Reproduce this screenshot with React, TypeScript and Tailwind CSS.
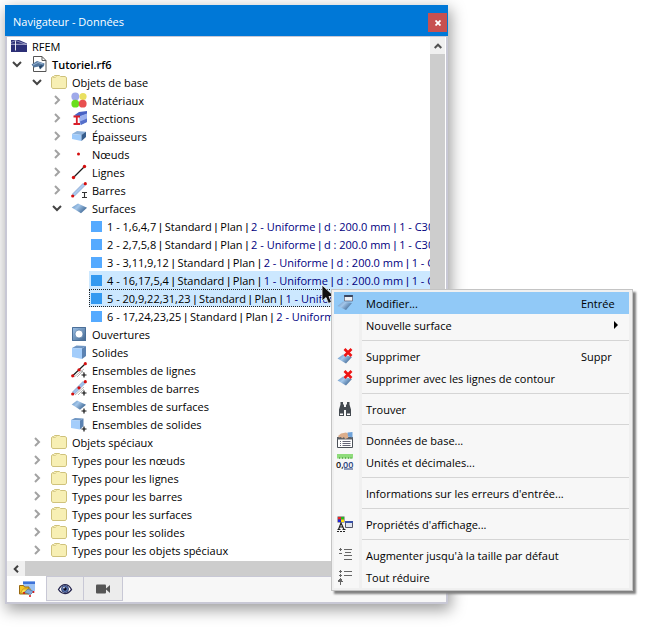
import type { ReactNode } from "react";
import clsx from "clsx";

const Svg = ({ children, crisp }: { children: ReactNode; crisp?: boolean }) => (
  <svg viewBox="0 0 16 16" className="block size-4 shrink-0" shapeRendering={crisp ? "crispEdges" : "auto"} aria-hidden="true">
    {children}
  </svg>
);

const Gradients = () => (
  <svg className="absolute size-0" aria-hidden="true">
    <defs>
      <linearGradient id="plate" x1="0" y1="0" x2="1" y2="0.6">
        <stop offset="0" stopColor="#5f8dbd" />
        <stop offset="0.45" stopColor="#a3c6ea" />
        <stop offset="1" stopColor="#3f6793" />
      </linearGradient>
      <linearGradient id="frame" x1="0" y1="0" x2="1" y2="1">
        <stop offset="0" stopColor="#9fc4ea" />
        <stop offset="1" stopColor="#41658d" />
      </linearGradient>
    </defs>
  </svg>
);

const Plus = () => <path d="M13 10.500v5M10.500 13h5" stroke="#111" strokeWidth="1.200" />;

const LogoIcon = () => (
  <Svg>
    <path d="M0 2h16v12H0z" fill="#2c2f76" />
    <path d="M8 2h8v3.500z" fill="#fff" />
    <path d="M0 6.300h16" stroke="#c9cbe4" strokeWidth=".8" />
    <path d="M4.500 2.500v10" stroke="#fff" strokeWidth=".9" />
    <path d="M0 4.500 4.500 2.500 15 6.300" stroke="#c9cbe4" strokeWidth=".6" fill="none" />
  </Svg>
);

const ModelIcon = () => (
  <Svg>
    <path d="M2.500.5h8.500l4 4v11H2.500z" fill="#fff" stroke="#555" />
    <path d="M11 .5v4h4" fill="none" stroke="#555" />
    <path d="M.5 8.500 6 5l7.500 2.500-.5 2.500-4 3.500-1-3L5 11l-2 .5z" fill="#54779f" />
    <path d="M2 9 7 6.500l5 1.500" fill="none" stroke="#a9c3dd" strokeWidth=".8" />
    <path d="m8 10 4-1-3 4z" fill="#23405f" />
  </Svg>
);

const FolderIcon = () => (
  <Svg>
    <path d="M.5 3.500 1.500 2.500h1l1-1h5l1 1H14l1.500 1V13l-1 1.500h-13L.5 13z" fill="#f7efb4" stroke="#cfc27c" />
    <path d="M1.500 3.500h3l1-1" stroke="#d9cd8c" fill="none" />
  </Svg>
);

const MaterialsIcon = () => (
  <Svg>
    <circle cx="4.300" cy="4.500" r="3.900" fill="#9fa9ea" />
    <circle cx="12" cy="4.500" r="3.600" fill="#e9e060" />
    <circle cx="4.300" cy="11.700" r="3.900" fill="#6adf1c" />
    <circle cx="11.700" cy="11.700" r="3.900" fill="#e85050" />
  </Svg>
);

const SectionsIcon = () => (
  <Svg>
    <path d="M3 5.500 8 2l8-1v3l-7 2.500z" fill="#4862c4" />
    <path d="m8 6.500 8-3v8.500l-7 3z" fill="#9bb0ee" />
    <path d="m9 11.500 7-3v3.500l-6 3z" fill="#5670ca" />
    <path d="M2.500 6.500h6.500M2.500 14h6.500M5.800 6.500V14" stroke="#d81e2a" strokeWidth="1.800" />
  </Svg>
);

const ThicknessIcon = () => (
  <Svg>
    <path d="M1 6 6 3l9 .8-4 3.200z" fill="#8fb2da" />
    <path d="M1 6l9.500 1v6L1 11z" fill="#9dcafb" />
    <path d="m10.500 7 4.500-3.200V9l-4.500 4z" fill="#375d8c" />
  </Svg>
);

const NodeIcon = () => (
  <Svg>
    <circle cx="7.500" cy="8" r="1.500" fill="#d40f0f" />
  </Svg>
);

const LineIcon = () => (
  <Svg>
    <path d="M2.500 13.500 13.500 2.500" stroke="#1a1a1a" strokeWidth="1.200" />
    <circle cx="2.500" cy="13.500" r="1.700" fill="#d40f0f" />
    <circle cx="13.500" cy="2.500" r="1.700" fill="#d40f0f" />
  </Svg>
);

const MemberIcon = () => (
  <Svg>
    <path d="M1.500 12 12 1.500l2 2L3.500 14z" fill="#a9c8ee" stroke="#7e9cc6" strokeWidth=".7" />
    <circle cx="1.700" cy="14" r="1.600" fill="#d40f0f" />
    <circle cx="14.300" cy="1.700" r="1.600" fill="#d40f0f" />
    <path d="M11 10.500h5M11 15.500h5M13.500 10.500v5" stroke="#333" strokeWidth="1.100" />
  </Svg>
);

const SurfaceIcon = () => (
  <Svg>
    <path d="M.7 7.400 7 3.400l9 4.300-6 5.600z" fill="url(#plate)" />
  </Svg>
);

const OpeningIcon = () => (
  <Svg>
    <path d="M1 1h14v14H1z" fill="url(#frame)" />
    <path d="M1.500 1.500h13v13h-13z" fill="none" stroke="#4b6f98" />
    <circle cx="8" cy="8" r="4" fill="#fff" stroke="#557ba6" strokeWidth=".7" />
  </Svg>
);

const SolidIcon = () => (
  <Svg>
    <path d="M1 4 5.500 1.500 15 2l-4 2.500z" fill="#6f96c4" />
    <path d="m1 4 10 .5V15L1 13z" fill="#a3cdfb" />
    <path d="m11 4.500 4-2.500v10l-4 3z" fill="#5b82b2" />
  </Svg>
);

const LineSetIcon = () => (
  <Svg>
    <path d="m3 15 10-8M6 15l6-6M9 8l4 3" stroke="#999" strokeWidth=".7" />
    <path d="M1.700 13.800 14.300 1.700" stroke="#1a1a1a" strokeWidth="1.200" />
    <circle cx="1.700" cy="13.800" r="1.600" fill="#d40f0f" />
    <circle cx="8" cy="7.800" r="1.600" fill="#d40f0f" />
    <circle cx="14.300" cy="1.700" r="1.600" fill="#d40f0f" />
    <Plus />
  </Svg>
);

const MemberSetIcon = () => (
  <Svg>
    <path d="m4 15 9-8M7 15l6-6" stroke="#999" strokeWidth=".7" />
    <path d="M1.500 12 12 1.500l2 2L3.500 14z" fill="#9fc0ec" stroke="#7e9cc6" strokeWidth=".7" />
    <circle cx="1.700" cy="14" r="1.600" fill="#d40f0f" />
    <circle cx="8" cy="7.800" r="1.600" fill="#d40f0f" />
    <circle cx="14.300" cy="1.700" r="1.600" fill="#d40f0f" />
    <Plus />
  </Svg>
);

const SurfaceSetIcon = () => (
  <Svg>
    <path d="M.7 6.400 6 2.400l9 4.300-6 5z" fill="url(#plate)" />
    <Plus />
  </Svg>
);

const SolidSetIcon = () => (
  <Svg>
    <path d="M0 4 4 2l8.500.5L9 4.500z" fill="#6f96c4" />
    <path d="m0 4 9 .5v9L0 12z" fill="#a3cdfb" />
    <path d="m9 4.500 3.500-2V10L9 13.500z" fill="#5b82b2" />
    <Plus />
  </Svg>
);

const EditIcon = () => (
  <Svg>
    <path d="M.5 11 6 6.500l9 1.500-6 7z" fill="url(#plate)" />
    <path d="M7.500.5h8v5.500h-8z" fill="#eef1f5" stroke="#667" strokeWidth=".8" />
    <path d="M7.200 0h8.600v2H7.200z" fill="#3a4660" />
  </Svg>
);

const DeleteIcon = () => (
  <Svg>
    <path d="M.5 10.500 6 6.500l9 2.500-6 6.500z" fill="url(#plate)" />
    <path d="m7.500 1 7 7M14.500 1l-7 7" stroke="#ee1313" strokeWidth="2.600" />
  </Svg>
);

const BinocularsIcon = () => (
  <Svg>
    <path d="M3.500 1h2.500v2l1 1v2h2V4l1-1V1h2.500v2.500l1.500 5V15H9V9H7v6H2V8.500l1.500-5z" fill="#444a50" />
    <path d="M3 12.500h3v1.500H3zM10 12.500h3v1.500h-3z" fill="#fff" />
  </Svg>
);

const BaseDataIcon = () => (
  <Svg>
    <path d="M.5 5.500h15v10H.5z" fill="#fff" stroke="#4b5057" />
    <path d="M0 5h16v2.500H0z" fill="#5a5f66" />
    <path d="M3 9.500h1M3 11.500h1M3 13.500h1M5.500 9.500h8M5.500 11.500h8M5.500 13.500h8" stroke="#667" />
    <path d="M1 4 4 1.500l5-1 3 1.500-1 4-3 1-1-2-2 1.500-1-1.500-2 .5z" fill="#dcae8c" />
    <path d="m10.500.5 5-.5v5.500L11 4.500z" fill="#6fa3da" />
  </Svg>
);

const UnitsIcon = () => (
  <svg viewBox="0 0 16 16" className="block size-4 overflow-visible" aria-hidden="true">
    <path d="M0 0h16v4.500H0z" fill="#8fdc7b" />
    <path d="M2.500 3v2M5.500 3v2M8.500 3v2M11.500 3v2M14 3v2" stroke="#4f9b42" strokeWidth=".7" />
    <text x="-1" y="14" fontSize="9" fontWeight="600" fill="#111">
      0,
    </text>
    <text x="6" y="14" fontSize="9" fontWeight="600" fill="#27407c">
      00
    </text>
    <path d="M7 15h9" stroke="#27407c" />
  </svg>
);

const DisplayIcon = () => (
  <Svg>
    <path d="M.5.500h7v6h-7z" fill="#555" />
    <path d="M1 1h3v2.500H1z" fill="#e22" />
    <path d="M4 1h3v2.500H4z" fill="#2b2" />
    <path d="M1 3.500h3V6H1z" fill="#22d" />
    <path d="M4 3.500h3V6H4z" fill="#fd0" />
    <path d="M8.500 5.500h7v6h-7z" fill="#dfe5ef" stroke="#445" strokeWidth=".9" />
    <path d="M8 5h8v2H8z" fill="#3850a8" />
    <path d="m1.500 13.500 2.500-6.500 3 6.500M2.500 11h3.500M.5 13.500h3M5.500 13.500h3" fill="none" stroke="#222" strokeWidth="1.200" />
    <path d="M0 15.500h8" stroke="#222" strokeDasharray="2 1" />
  </Svg>
);

const ExpandIcon = () => (
  <Svg crisp>
    <path d="M2 2.500h3M3.500 1v3M2 6.500h3M7 2.500h8M8 5.500h6M7 8.500h8M7 12.500h8" stroke="#666" />
  </Svg>
);

const CollapseIcon = () => (
  <Svg crisp>
    <path d="M2 2.500h3M3.500 1v3M2 6.500h3M3.500 5v3M7 2.500h8M7 6.500h8M3.500 10v6" stroke="#666" />
    <path d="M3.500 8.500 6.500 13h-6z" fill="#666" />
  </Svg>
);

const DataTabIcon = () => (
  <Svg>
    <path d="M4 .5h12V10H4z" fill="#9cc2f3" />
    <path d="M4 .5h12V3H4z" fill="#3d72d8" />
    <path d="M.5 4.500h4l1 1.500H10v7H.5z" fill="#f5c623" stroke="#9a6a10" />
    <path d="M1.500 12 4 8h8l-2.500 4z" fill="#ffe04d" stroke="#b07a10" strokeWidth=".6" />
    <path d="m5 11.500 4-3.500 5.500 2.500-3 3z" fill="#7fa9d9" stroke="#3d5f8c" strokeWidth=".6" />
    <circle cx="5" cy="12" r="1" fill="#d40f0f" />
    <circle cx="14.500" cy="11" r="1" fill="#d40f0f" />
    <circle cx="11" cy="15" r="1" fill="#d40f0f" />
  </Svg>
);

const EyeIcon = () => (
  <Svg>
    <path d="M1.500 8.500C4 4.500 6 3.700 8 3.700s4.500 1 6.500 4.800c-2 2.800-4 4-6.500 4s-4.500-1-6.500-4z" fill="#fff" stroke="#26264f" strokeWidth="1.300" />
    <circle cx="8" cy="8" r="3.500" fill="#5b79b8" stroke="#27325e" strokeWidth=".8" />
    <circle cx="8" cy="8" r="1.700" fill="#0b0b20" />
    <circle cx="7" cy="6.800" r=".8" fill="#fff" />
  </Svg>
);

const CameraIcon = () => (
  <Svg>
    <rect x="1" y="3.500" width="10" height="9" rx="1" fill="#555" />
    <path d="m10.500 8 4.500-4v8z" fill="#555" />
  </Svg>
);

const Chevron = ({ open }: { open: boolean }) => (
  <svg viewBox="0 0 10 10" className="size-[10px]" fill="none" strokeWidth="2" aria-hidden="true">
    <path d={open ? "m1 3 4 4 4-4" : "m3 1 4 4-4 4"} stroke={open ? "#444" : "#a2a2a2"} />
  </svg>
);

// Open Sans has a very wide bar glyph, the Arial one is narrow
const Bar = () => <span className="font-['Liberation_Sans',sans-serif]">|</span>;

type Node = { depth: 1 | 2 | 3; label: string; icon: ReactNode; open?: boolean; bold?: boolean };

const indent = { 1: "pl-0", 2: "pl-5", 3: "pl-10" };

const topNodes: Node[] = [
  { depth: 1, label: "Tutoriel.rf6", icon: <ModelIcon />, open: true, bold: true },
  { depth: 2, label: "Objets de base", icon: <FolderIcon />, open: true },
  { depth: 3, label: "Matériaux", icon: <MaterialsIcon />, open: false },
  { depth: 3, label: "Sections", icon: <SectionsIcon />, open: false },
  { depth: 3, label: "Épaisseurs", icon: <ThicknessIcon />, open: false },
  { depth: 3, label: "Nœuds", icon: <NodeIcon />, open: false },
  { depth: 3, label: "Lignes", icon: <LineIcon />, open: false },
  { depth: 3, label: "Barres", icon: <MemberIcon />, open: false },
  { depth: 3, label: "Surfaces", icon: <SurfaceIcon />, open: true },
];

const surfaces = [
  { name: "1 - 1,6,4,7", thickness: "2 - Uniforme" },
  { name: "2 - 2,7,5,8", thickness: "2 - Uniforme" },
  { name: "3 - 3,11,9,12", thickness: "2 - Uniforme" },
  { name: "4 - 16,17,5,4", thickness: "1 - Uniforme", selected: true },
  { name: "5 - 20,9,22,31,23", thickness: "1 - Uniforme", selected: true, focused: true },
  { name: "6 - 17,24,23,25", thickness: "2 - Uniforme" },
];

const bottomNodes: Node[] = [
  { depth: 3, label: "Ouvertures", icon: <OpeningIcon /> },
  { depth: 3, label: "Solides", icon: <SolidIcon /> },
  { depth: 3, label: "Ensembles de lignes", icon: <LineSetIcon /> },
  { depth: 3, label: "Ensembles de barres", icon: <MemberSetIcon /> },
  { depth: 3, label: "Ensembles de surfaces", icon: <SurfaceSetIcon /> },
  { depth: 3, label: "Ensembles de solides", icon: <SolidSetIcon /> },
  { depth: 2, label: "Objets spéciaux", icon: <FolderIcon />, open: false },
  { depth: 2, label: "Types pour les nœuds", icon: <FolderIcon />, open: false },
  { depth: 2, label: "Types pour les lignes", icon: <FolderIcon />, open: false },
  { depth: 2, label: "Types pour les barres", icon: <FolderIcon />, open: false },
  { depth: 2, label: "Types pour les surfaces", icon: <FolderIcon />, open: false },
  { depth: 2, label: "Types pour les solides", icon: <FolderIcon />, open: false },
  { depth: 2, label: "Types pour les objets spéciaux", icon: <FolderIcon />, open: false },
];

const TreeRow = ({ node }: { node: Node }) => (
  <li role="treeitem" className={clsx("flex h-[18px] items-center gap-[5px]", indent[node.depth])}>
    {node.open === undefined ? (
      <span className="w-[18px]" />
    ) : (
      <button type="button" aria-label={`Basculer ${node.label}`} className="flex w-[18px] justify-center">
        <Chevron open={node.open} />
      </button>
    )}
    {node.icon}
    <span className={clsx("pt-[2px]", node.bold && "font-semibold")}>{node.label}</span>
  </li>
);

type MenuEntry = { label: string; icon?: ReactNode; shortcut?: string; submenu?: boolean; active?: boolean };

const menuGroups: MenuEntry[][] = [
  [
    { label: "Modifier...", icon: <EditIcon />, shortcut: "Entrée", active: true },
    { label: "Nouvelle surface", submenu: true },
  ],
  [
    { label: "Supprimer", icon: <DeleteIcon />, shortcut: "Suppr" },
    { label: "Supprimer avec les lignes de contour", icon: <DeleteIcon /> },
  ],
  [{ label: "Trouver", icon: <BinocularsIcon /> }],
  [
    { label: "Données de base...", icon: <BaseDataIcon /> },
    { label: "Unités et décimales...", icon: <UnitsIcon /> },
  ],
  [{ label: "Informations sur les erreurs d'entrée..." }],
  [{ label: "Propriétés d'affichage...", icon: <DisplayIcon /> }],
  [
    { label: "Augmenter jusqu'à la taille par défaut", icon: <ExpandIcon /> },
    { label: "Tout réduire", icon: <CollapseIcon /> },
  ],
];

const ContextMenu = () => (
  <div
    role="menu"
    className="absolute top-[284px] left-[326px] w-[302px] border border-[#c4c4c4] bg-[#f0f0f0] p-[2px] pr-[3px] shadow-[3px_3px_2px_#808080]"
  >
    {menuGroups.map((group, i) => (
      <div key={i} role="group" className="bg-[#f7f7f7]">
        {i > 0 && (
          <div className="flex h-[9px]">
            <div className="ml-[25px] w-[3px] bg-[#f0f0f0]" />
            <hr className="mt-1 h-px flex-1 border-0 bg-[#d5d5d5]" />
          </div>
        )}
        {group.map((entry) => (
          <button
            key={entry.label}
            type="button"
            role="menuitem"
            className={clsx("flex h-[22px] w-full items-center text-left", entry.active && "bg-[#91c9f7]")}
          >
            <span className="w-[25px] pl-[3px]">{entry.icon}</span>
            <span className={clsx("w-[3px] self-stretch", !entry.active && "bg-[#f0f0f0]")} />
            <span className="flex-1 pt-[2px] pl-1 whitespace-nowrap">{entry.label}</span>
            {entry.shortcut && <span className="w-12 pt-[2px]">{entry.shortcut}</span>}
            {entry.submenu && (
              <svg viewBox="0 0 4 8" className="mr-[11px] h-2 w-1" aria-hidden="true">
                <path d="m0 0 4 4-4 4z" />
              </svg>
            )}
          </button>
        ))}
      </div>
    ))}
  </div>
);

const Cursor = () => (
  <svg viewBox="0 0 14 22" className="absolute top-[279px] left-[316px] h-[22px] w-[14px]" aria-hidden="true">
    <path d="M1 1v16l4-3.500 2.500 6 3-1.500L8 12.500h5.500z" fill="#111" stroke="#fff" strokeWidth=".8" />
  </svg>
);

export default function App() {
  return (
    <main className="min-h-screen bg-white py-[5px] pr-[203px] pl-[5px] font-['Open_Sans','Noto_Sans',sans-serif] text-[11px] leading-[18px] text-black">
      <Gradients />
      <div className="relative">
        <section className="bg-[#0078d7] shadow-[2px_5px_14px_1px_rgba(0,0,0,0.38)]">
          <header className="flex h-[31px] items-center justify-between pr-px pl-2 text-white">
            <h1 className="pt-[2px]">Navigateur - Données</h1>
            <button type="button" aria-label="Fermer" className="mt-1 flex size-[19px] items-center justify-center bg-[#c75050]">
              <svg viewBox="0 0 6 6" className="size-[6px]" stroke="#fff" strokeWidth="1.800" aria-hidden="true">
                <path d="m.5.500 5 5M5.500.500l-5 5" />
              </svg>
            </button>
          </header>

          <div className="border-2 border-t border-[#c8c8d5] bg-[#f7f7f7]">
            <div className="flex bg-white pr-px">
              <ul role="tree" className="h-[524px] min-w-0 flex-1 overflow-hidden pl-px whitespace-nowrap">
                <li role="treeitem" className="flex h-[18px] items-center gap-[5px] pl-[3px]">
                  <LogoIcon />
                  <span className="pt-[2px]">RFEM</span>
                </li>
                {topNodes.map((node) => (
                  <TreeRow key={node.label} node={node} />
                ))}
                {surfaces.map((s) => (
                  <li
                    key={s.name}
                    role="treeitem"
                    aria-selected={!!s.selected}
                    className={clsx(
                      "ml-[81px] flex h-[18px] items-center gap-[5px] border border-transparent pl-px",
                      s.selected && "bg-[#cce8ff]",
                      s.focused && "border-dotted border-[#222]!",
                    )}
                  >
                    <span className={clsx("size-[11px] shrink-0", s.selected ? "bg-[#3399f0]" : "bg-[#55aaff]")} />
                    <span className="pt-[2px]">
                      {s.name} <Bar /> Standard <Bar /> Plan <Bar />{" "}
                      <span className="text-[#000080]">
                        {s.thickness} <Bar /> d : 200.0 mm <Bar /> 1 - C30/37
                      </span>
                    </span>
                  </li>
                ))}
                {bottomNodes.map((node) => (
                  <TreeRow key={node.label} node={node} />
                ))}
              </ul>
              <div className="flex w-[15px] flex-col bg-[#f0f0f0]">
                <button type="button" aria-label="Défiler vers le haut" className="flex h-[17px] items-center justify-center">
                  <svg viewBox="0 0 8 6" className="h-[6px] w-2" fill="none" stroke="#505050" strokeWidth="2" aria-hidden="true">
                    <path d="m.7 5 3.300-3.300L7.300 5" />
                  </svg>
                </button>
                <div className="flex-1 bg-[#cdcdcd]" />
              </div>
            </div>

            <div className="flex h-[15px] bg-[#f0f0f0]">
              <button type="button" aria-label="Défiler vers la gauche" className="flex w-[18px] items-center justify-center">
                <svg viewBox="0 0 6 8" className="h-2 w-[6px]" fill="none" stroke="#404040" strokeWidth="2" aria-hidden="true">
                  <path d="M5 .7 1.700 4 5 7.300" />
                </svg>
              </button>
              <div className="mr-4 flex-1 bg-[#cdcdcd]" />
            </div>

            <nav className="flex h-[26px] items-start border-t border-[#c8c8d5]">
              <button type="button" aria-label="Données" className="-mt-px flex h-[26px] w-[39px] items-center justify-center bg-white">
                <DataTabIcon />
              </button>
              <button type="button" aria-label="Affichage" className="flex h-6 w-[38px] items-center justify-center border border-t-0 border-[#c8c8d5] bg-[#ececec]">
                <EyeIcon />
              </button>
              <button type="button" aria-label="Vues" className="flex h-6 w-[39px] items-center justify-center border border-t-0 border-l-0 border-[#c8c8d5] bg-[#ececec]">
                <CameraIcon />
              </button>
            </nav>
          </div>
        </section>

        <Cursor />
        <ContextMenu />
      </div>
    </main>
  );
}
